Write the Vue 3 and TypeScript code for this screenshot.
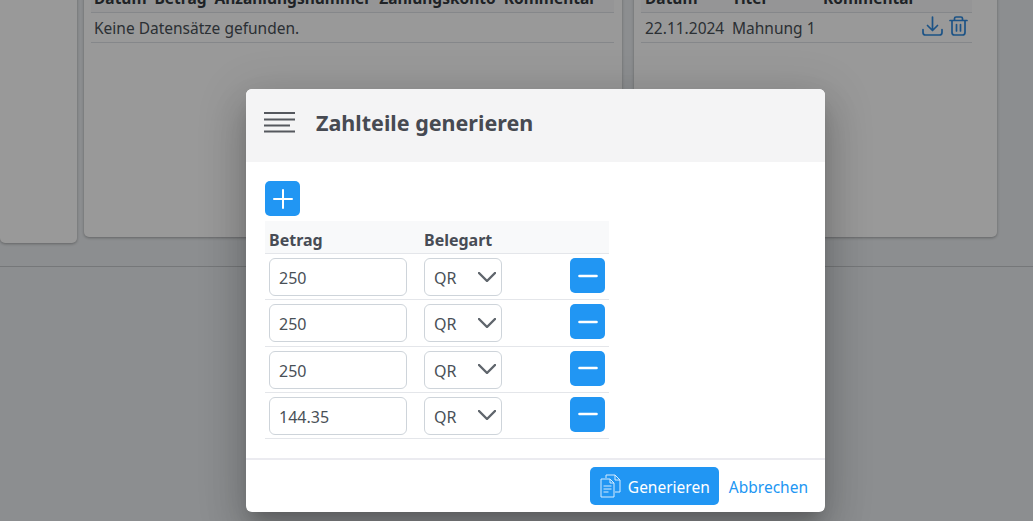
<script setup lang="ts">
const rows = ['250', '250', '250', '144.35']
</script>

<template>
  <div class="page">
    <div class="backdrop">
      <div class="cards">
        <section class="card card-a"></section>
        <section class="card card-b">
          <div class="tbl">
            <div class="th"><b>Datum</b><b>Betrag</b><b>Anzahlungsnummer</b><b>Zahlungskonto</b><b>Kommentar</b></div>
            <div class="td">Keine Datensätze gefunden.</div>
          </div>
        </section>
        <section class="card card-c">
          <div class="tbl">
            <div class="th th-c"><b class="c1">Datum</b><b class="c2">Titel</b><b>Kommentar</b></div>
            <div class="td td-c">
              <span class="c1">22.11.2024</span><span class="c2">Mahnung 1</span>
              <span class="acts">
                <svg width="21" height="20" viewBox="0 0 21 20" fill="none" stroke="currentColor" stroke-width="1.7" stroke-linecap="round" stroke-linejoin="round">
                  <path d="M10.500 1v13M5.500 9.500l5 5 5-5M1 13.500v3q0 2.500 2.500 2.500h14q2.500 0 2.500-2.500v-3" />
                </svg>
                <svg width="19" height="20" viewBox="0 0 19 20" fill="none" stroke="currentColor" stroke-width="1.7" stroke-linecap="round" stroke-linejoin="round">
                  <path d="M1 4.500h17M5.500 4.500V2.600q0-1.600 1.600-1.600h4.800q1.600 0 1.600 1.600v1.900M3 4.500v12q0 2.500 2.500 2.500h8q2.500 0 2.500-2.500v-12M7.500 8.500v6.500M11.500 8.500v6.500" />
                </svg>
              </span>
            </div>
          </div>
        </section>
      </div>
      <div class="rule"></div>
    </div>

    <div class="overlay">
      <div class="dialog">
        <header class="dlg-head">
          <svg class="menu" width="32" height="22" viewBox="0 0 32 22" fill="none" stroke="#55585e" stroke-width="2">
            <path d="M0 2h31M0 8.500h31M0 14.500h26M0 20.500h31" />
          </svg>
          <h2>Zahlteile generieren</h2>
        </header>
        <div class="dlg-body">
          <button class="btn-icon" type="button" aria-label="Hinzufügen">
            <svg width="20" height="20" viewBox="0 0 20 20" stroke="#fff" stroke-width="2" stroke-linecap="round"><path d="M10 1v18M1 10h18" /></svg>
          </button>
          <div class="grid">
            <div class="grid-head"><b class="col-a">Betrag</b><b class="col-b">Belegart</b></div>
            <div v-for="(r, i) in rows" :key="i" class="grid-row">
              <div class="col-a"><input class="field" :value="r" /></div>
              <div class="col-b">
                <div class="select"><span>QR</span>
                  <svg width="18" height="10" viewBox="0 0 18 10" fill="none" stroke="#5f656c" stroke-width="2.400" stroke-linecap="round" stroke-linejoin="round"><path d="M1 1l8 8 8-8" /></svg>
                </div>
              </div>
              <button class="btn-icon minus" type="button" aria-label="Entfernen">
                <svg width="20" height="4" viewBox="0 0 20 4" stroke="#fff" stroke-width="2.600" stroke-linecap="round"><path d="M1.500 2h17" /></svg>
              </button>
            </div>
          </div>
        </div>
        <footer class="dlg-foot">
          <button class="btn-go" type="button">
            <svg width="21" height="24" viewBox="0 0 21 24" fill="none" stroke="#d6ebfd" stroke-width="1" stroke-linejoin="round">
              <path d="M6 4V1h9l5 5v12h-5" />
              <path d="M15 1v5h5" />
              <path d="M1 5h9l4 4v14H1z" />
              <path d="M10 5v4h4M3.500 12h8M3.500 15h8M3.500 18h5" />
            </svg>
            <span>Generieren</span>
          </button>
          <a class="link">Abbrechen</a>
        </footer>
      </div>
    </div>
  </div>
</template>

<style scoped>
.page {
  position: relative;
  height: 521px;
  overflow: hidden;
  font-family: "Noto Sans", "Open Sans", sans-serif;
  font-size: 16px;
  color: #495057;
}
.backdrop {
  height: 100%;
  background: #eaedf0;
  display: flow-root;
}
.cards {
  display: flex;
  align-items: flex-start;
  margin-top: -20px;
  height: 286px;
}
.card {
  background: #fff;
  border-radius: 5px;
  box-shadow: 0 1px 3px rgba(0, 0, 0, 0.3);
  flex: none;
  box-sizing: border-box;
}
.card-a {
  width: 77px;
  height: 263px;
  margin-right: 7px;
}
.card-b {
  width: 538px;
  height: 257px;
  padding: 0 8px 0 7px;
  margin-right: 12px;
}
.card-c {
  width: 363px;
  height: 257px;
  padding: 0 25px 0 7px;
}
.tbl {
  font-size: 15.5px;
}
.th {
  height: 33px;
  display: flex;
  align-items: flex-end;
  gap: 8px;
  padding: 0 3px 3px;
  background: #f8f9fa;
  border-bottom: 1px solid #dee2e6;
  color: #343a40;
  white-space: nowrap;
  box-sizing: border-box;
}
.td {
  height: 30px;
  display: flex;
  align-items: center;
  padding: 0 3px;
  border-bottom: 1px solid #dee2e6;
  box-sizing: border-box;
}
.th-c,
.td-c {
  gap: 0;
  padding-left: 4px;
}
.c1 {
  width: 87px;
}
.c2 {
  width: 91px;
}
.acts {
  margin-left: auto;
  margin-right: 1px;
  margin-top: -3px;
  display: flex;
  gap: 6px;
  color: #2f8ae0;
}
.rule {
  border-top: 1px solid #c4c7ca;
}
.overlay {
  position: absolute;
  inset: 0;
  background: rgba(0, 0, 0, 0.4);
  padding: 89px 0 0 246px;
  box-sizing: border-box;
}
.dialog {
  width: 579px;
  height: 423px;
  background: #fff;
  border-radius: 6px;
  overflow: hidden;
  display: flex;
  flex-direction: column;
  box-shadow: 0 11px 15px -7px rgba(0, 0, 0, 0.2), 0 24px 38px 3px rgba(0, 0, 0, 0.14), 0 9px 46px 8px rgba(0, 0, 0, 0.12);
}
.dlg-head {
  height: 73px;
  flex: none;
  background: #f4f4f5;
  display: flex;
  align-items: center;
  padding-left: 18px;
  gap: 20px;
}
.menu {
  margin-top: -7px;
}
h2 {
  margin: -6px 0 0;
  font-size: 21.500px;
  font-weight: 700;
  color: #474a52;
}
.dlg-body {
  flex: 1;
  padding: 19px 19px 0;
}
.btn-icon {
  width: 35px;
  height: 35px;
  border: 0;
  padding: 0;
  border-radius: 5px;
  background: #2196f3;
  display: flex;
  align-items: center;
  justify-content: center;
}
.grid {
  width: 344px;
  margin-top: 5px;
}
.grid-head {
  height: 33px;
  background: #f8f9fa;
  border-bottom: 1px solid #e4e6ea;
  display: flex;
  align-items: center;
  box-sizing: border-box;
  color: #474c55;
}
.grid-head b {
  margin-top: 5px;
}
.grid-row {
  height: 46.300px;
  display: flex;
  align-items: flex-start;
  padding-top: 4px;
  border-bottom: 1px solid #e4e6ea;
  box-sizing: border-box;
}
.col-a {
  width: 159px;
  padding-left: 4px;
  box-sizing: border-box;
  flex: none;
}
.col-b {
  width: 146px;
  flex: none;
}
.field {
  display: block;
  width: 138px;
  height: 38px;
  box-sizing: border-box;
  border: 1px solid #ced4da;
  border-radius: 6px;
  padding: 2px 9px 0;
  font: inherit;
  color: #495057;
  outline: none;
}
.select {
  width: 78px;
  height: 38px;
  box-sizing: border-box;
  border: 1px solid #ced4da;
  border-radius: 6px;
  padding: 2px 5px 0 9px;
  display: flex;
  align-items: center;
  justify-content: space-between;
}
.select svg {
  margin-top: -3px;
}
.dlg-foot {
  flex: none;
  height: 54px;
  border-top: 2px solid #ebebf0;
  display: flex;
  align-items: center;
  justify-content: flex-end;
  gap: 10px;
  padding: 0 17px 0 0;
  box-sizing: border-box;
  font-size: 15.5px;
}
.btn-go {
  width: 129px;
  height: 38px;
  border: 0;
  border-radius: 5px;
  background: #2196f3;
  color: #fff;
  font: inherit;
  display: flex;
  align-items: center;
  gap: 7px;
  padding: 0 0 0 10px;
  white-space: nowrap;
}
.btn-go span,
.link {
  padding-top: 2px;
}
.link {
  color: #2196f3;
}
</style>
